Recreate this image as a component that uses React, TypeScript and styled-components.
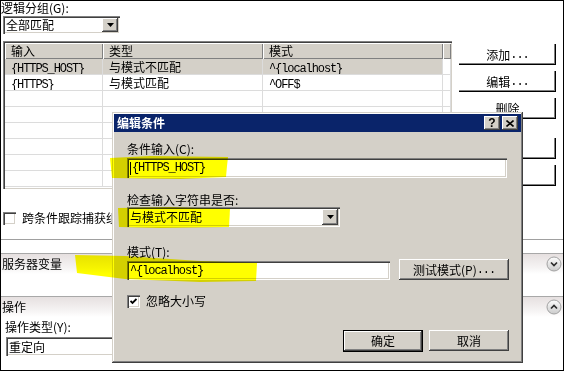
import styled, { createGlobalStyle } from 'styled-components'

const GlobalStyle = createGlobalStyle`
  body {
    margin: 0;
    background: #fff;
  }
`

const sunken = 'inset 1px 1px #808080, inset 2px 2px #404040, inset -1px -1px #fff, inset -2px -2px #d4d0c8'
const raised = 'inset -1px -1px #404040, inset 1px 1px #fff, inset -2px -2px #808080, inset 2px 2px #d4d0c8'

const Page = styled.div`
  position: relative;
  width: 564px;
  height: 371px;
  box-sizing: border-box;
  border: 1px solid #000;
  background: #fff;
  overflow: hidden;
  font-family: 'Noto Sans CJK SC', 'Liberation Sans', sans-serif;
  font-size: 12px;
  line-height: 14px;
  color: #000;
`

const Code = styled.span`
  font-family: 'Liberation Mono', monospace;
  font-size: 12px;
  letter-spacing: -1.1px;
`

const Caret = styled.span`
  display: inline-block;
  width: 1px;
  height: 13px;
  margin-right: 1px;
  background: #000;
  vertical-align: -2px;
`

const FieldLabel = styled.div<{ $top?: number; $left?: number }>`
  height: 14px;
  margin-top: ${({ $top }) => $top ?? 0}px;
  margin-left: ${({ $left }) => $left ?? 0}px;
  white-space: nowrap;
`

const Combo = styled.div<{ $width: number; $height: number; $top?: number; $left?: number }>`
  display: flex;
  align-items: stretch;
  box-sizing: border-box;
  width: ${({ $width }) => $width}px;
  height: ${({ $height }) => $height}px;
  margin-top: ${({ $top }) => $top ?? 0}px;
  margin-left: ${({ $left }) => $left ?? 0}px;
  padding: 2px;
  background: #fff;
  box-shadow: ${sunken};
`

const ComboText = styled.div`
  flex: 1;
  display: flex;
  align-items: center;
  padding-left: 1px;
  white-space: nowrap;
`

const DropButton = styled.div`
  width: 16px;
  display: flex;
  align-items: center;
  justify-content: center;
  background: #d4d0c8;
  box-shadow: ${raised};
`

const TableRow = styled.div`
  display: flex;
  margin-top: 7px;
  margin-left: 2px;
`

const Grid = styled.div`
  box-sizing: border-box;
  width: 449px;
  height: 148px;
  padding: 2px 1px 1px 2px;
  box-shadow: inset 1px 1px #808080, inset 2px 2px #404040, inset -1px -1px #d4d0c8;
  display: grid;
  grid-template-columns: 98px 160px 180px 1fr;
  grid-auto-rows: 16px;
  overflow: hidden;
`

const HeadCell = styled.div`
  padding-left: 6px;
  line-height: 16px;
  background: #d4d0c8;
  box-shadow: inset 1px 1px #fff, inset -1px -1px #808080;
  white-space: nowrap;
  overflow: hidden;
`

const Cell = styled.div<{ $selected?: boolean }>`
  box-sizing: border-box;
  padding-left: 6px;
  line-height: 15px;
  background: ${({ $selected }) => ($selected ? '#d4d0c8' : '#fff')};
  border-right: 1px solid #dcdcdc;
  border-bottom: 1px solid #dcdcdc;
  white-space: nowrap;
  overflow: hidden;
`

const SideButtons = styled.div`
  display: flex;
  flex-direction: column;
  gap: 6px;
  margin-left: 7px;
  padding-top: 3px;
`

const SideButton = styled.div<{ $apart?: boolean }>`
  width: 97px;
  height: 21px;
  display: flex;
  align-items: center;
  justify-content: center;
  background: #fff;
  box-shadow: inset -1px -1px #000, inset -2px -2px #808080;
  margin-top: ${({ $apart }) => ($apart ? 13 : 0)}px;
`

const CheckRow = styled.label<{ $top: number; $left: number }>`
  display: flex;
  align-items: center;
  gap: 6px;
  height: 14px;
  margin-top: ${({ $top }) => $top}px;
  margin-left: ${({ $left }) => $left}px;
  white-space: nowrap;
`

const CheckBox = styled.span`
  width: 13px;
  height: 13px;
  flex: none;
  display: flex;
  align-items: center;
  justify-content: center;
  background: #fff;
  box-shadow: ${sunken};
`

const Rule = styled.div`
  height: 1px;
  margin-top: 14px;
  background: #a0a0a0;
`

const Band = styled.div<{ $top: number }>`
  display: flex;
  align-items: center;
  justify-content: space-between;
  height: 20px;
  margin-top: ${({ $top }) => $top}px;
  padding: 0 1px;
  border-top: 1px solid #a8a8a8;
  background: linear-gradient(#e6e0e0, #f6f4f4 70%, #fff);
`

const Dialog = styled.div`
  position: absolute;
  left: 111px;
  top: 111px;
  z-index: 1;
  width: 411px;
  height: 251px;
  box-sizing: border-box;
  padding: 2px;
  display: flex;
  flex-direction: column;
  background: #d4d0c8;
  box-shadow: inset -1px -1px #404040, inset 1px 1px #d4d0c8, inset -2px -2px #808080, inset 2px 2px #fff;
`

const TitleBar = styled.div`
  height: 18px;
  display: flex;
  align-items: center;
  justify-content: space-between;
  padding: 0 3px 0 3px;
  background: #0a246a;
  color: #fff;
  font-weight: bold;
`

const TitleButtons = styled.div`
  display: flex;
  gap: 2px;
`

const TitleButton = styled.div`
  width: 16px;
  height: 14px;
  display: flex;
  align-items: center;
  justify-content: center;
  background: #d4d0c8;
  box-shadow: ${raised};
  color: #000;
  font-family: 'Liberation Sans', sans-serif;
  font-size: 12px;
  font-weight: bold;
  line-height: 14px;
`

const DialogBody = styled.div`
  flex: 1;
  display: flex;
  flex-direction: column;
  padding: 10px 12px 0 13px;
`

const TextBox = styled.div<{ $width: number; $height: number; $top?: number; $left?: number }>`
  box-sizing: border-box;
  width: ${({ $width }) => $width}px;
  height: ${({ $height }) => $height}px;
  margin-top: ${({ $top }) => $top ?? 0}px;
  margin-left: ${({ $left }) => $left ?? 0}px;
  padding: 0 3px;
  display: flex;
  align-items: center;
  background: #fff;
  box-shadow: ${sunken};
  white-space: nowrap;
`

const PatternRow = styled.div`
  display: flex;
  align-items: flex-end;
  gap: 9px;
`

const Button = styled.div<{ $width: number; $default?: boolean }>`
  box-sizing: border-box;
  width: ${({ $width }) => $width}px;
  height: ${({ $default }) => ($default ? 22 : 21)}px;
  display: flex;
  align-items: center;
  justify-content: center;
  background: #d4d0c8;
  border: ${({ $default }) => ($default ? '1px solid #000' : 'none')};
  box-shadow: ${raised};
  white-space: nowrap;
`

const Footer = styled.div`
  display: flex;
  justify-content: flex-end;
  gap: 6px;
  margin-top: 22px;
`

const Marker = styled.svg`
  position: absolute;
  left: -1px;
  top: -1px;
  z-index: 2;
  pointer-events: none;
  mix-blend-mode: multiply;
`

function DownArrow() {
  return (
    <svg width="7" height="4" viewBox="0 0 7 4">
      <polygon points="0,0 7,0 3.5,4" fill="#000" />
    </svg>
  )
}

function Chevron({ up, id }: { up?: boolean; id: string }) {
  return (
    <svg width="16" height="16" viewBox="0 0 16 16">
      <defs>
        <linearGradient id={id} x1="0" y1="0" x2="0" y2="1">
          <stop offset="0" stopColor="#fdfdfd" />
          <stop offset="1" stopColor="#cbcbcb" />
        </linearGradient>
      </defs>
      <circle cx="8" cy="8" r="7" fill={`url(#${id})`} stroke="#a2a2a2" />
      <path
        d={up ? 'M5 9.5 L8 6.5 L11 9.5' : 'M5 6.5 L8 9.5 L11 6.5'}
        fill="none"
        stroke="#2c2c2c"
        strokeWidth="1.7"
      />
    </svg>
  )
}

const rules = [
  { input: '{HTTPS_HOST}', type: '与模式不匹配', pattern: '^{localhost}', selected: true },
  { input: '{HTTPS}', type: '与模式匹配', pattern: '^OFF$' },
]

export default function App() {
  const blanks = Array.from({ length: 8 - rules.length })

  return (
    <>
      <GlobalStyle />
      <Page>
        <FieldLabel>逻辑分组(G):</FieldLabel>
        <Combo $width={117} $height={18} $top={1} $left={2}>
          <ComboText>全部匹配</ComboText>
          <DropButton>
            <DownArrow />
          </DropButton>
        </Combo>

        <TableRow>
          <Grid>
            <HeadCell>输入</HeadCell>
            <HeadCell>类型</HeadCell>
            <HeadCell>模式</HeadCell>
            <HeadCell />
            {rules.map((r) => (
              <>
                <Cell $selected={r.selected}>
                  <Code>{r.input}</Code>
                </Cell>
                <Cell $selected={r.selected}>{r.type}</Cell>
                <Cell $selected={r.selected}>
                  <Code>{r.pattern}</Code>
                </Cell>
                <Cell />
              </>
            ))}
            {blanks.map(() => (
              <>
                <Cell />
                <Cell />
                <Cell />
                <Cell />
              </>
            ))}
          </Grid>
          <SideButtons>
            <SideButton>
              添加<Code>...</Code>
            </SideButton>
            <SideButton>
              编辑<Code>...</Code>
            </SideButton>
            <SideButton>删除</SideButton>
            <SideButton $apart>上移</SideButton>
            <SideButton>下移</SideButton>
          </SideButtons>
        </TableRow>

        <CheckRow $top={22} $left={2}>
          <CheckBox />
          跨条件跟踪捕获组
        </CheckRow>
        <Rule />

        <Band $top={13}>
          服务器变量
          <Chevron id="chev-down" />
        </Band>
        <Band $top={22}>
          操作
          <Chevron id="chev-up" up />
        </Band>
        <FieldLabel $top={3} $left={4}>
          操作类型(Y):
        </FieldLabel>
        <TextBox $width={140} $height={19} $top={3} $left={5}>
          重定向
        </TextBox>

        <Dialog>
          <TitleBar>
            编辑条件
            <TitleButtons>
              <TitleButton>?</TitleButton>
              <TitleButton>
                <svg width="8" height="7" viewBox="0 0 8 7">
                  <path d="M0.5 0.5 L7.5 6.5 M7.5 0.5 L0.5 6.5" stroke="#000" strokeWidth="1.6" />
                </svg>
              </TitleButton>
            </TitleButtons>
          </TitleBar>
          <DialogBody>
            <FieldLabel>条件输入(C):</FieldLabel>
            <TextBox $width={380} $height={20} $top={2}>
              <Caret />
              <Code>{'{HTTPS_HOST}'}</Code>
            </TextBox>

            <FieldLabel $top={15}>检查输入字符串是否:</FieldLabel>
            <Combo $width={213} $height={20}>
              <ComboText>与模式不匹配</ComboText>
              <DropButton>
                <DownArrow />
              </DropButton>
            </Combo>

            <FieldLabel $top={18}>模式(T):</FieldLabel>
            <PatternRow>
              <TextBox $width={263} $height={19}>
                <Code>^{'{localhost}'}</Code>
              </TextBox>
              <Button $width={110}>
                测试模式(P)<Code>...</Code>
              </Button>
            </PatternRow>

            <CheckRow $top={14} $left={0}>
              <CheckBox>
                <svg width="7" height="7" viewBox="0 0 7 7">
                  <path d="M0.5 3 L2.5 5 L6.5 1" fill="none" stroke="#000" strokeWidth="1.8" />
                </svg>
              </CheckBox>
              忽略大小写
            </CheckRow>

            <Footer>
              <Button $width={80} $default>
                确定
              </Button>
              <Button $width={80}>取消</Button>
            </Footer>
          </DialogBody>
        </Dialog>

        <Marker width="564" height="371" viewBox="0 0 564 371">
          <path d="M110 158 L150 156 L228 157 L227 166 L226 177 L180 179 L112 178 Z" fill="#ffff00" />
          <path d="M118 208 L170 207 L230 209 L229 227 L160 228 L119 227 Z" fill="#ffff00" />
          <path
            d="M75 255 L125 256 L200 261 L257 263 L256 281 L200 282 L125 279 L77 273 Z"
            fill="#ffff00"
          />
        </Marker>
      </Page>
    </>
  )
}
